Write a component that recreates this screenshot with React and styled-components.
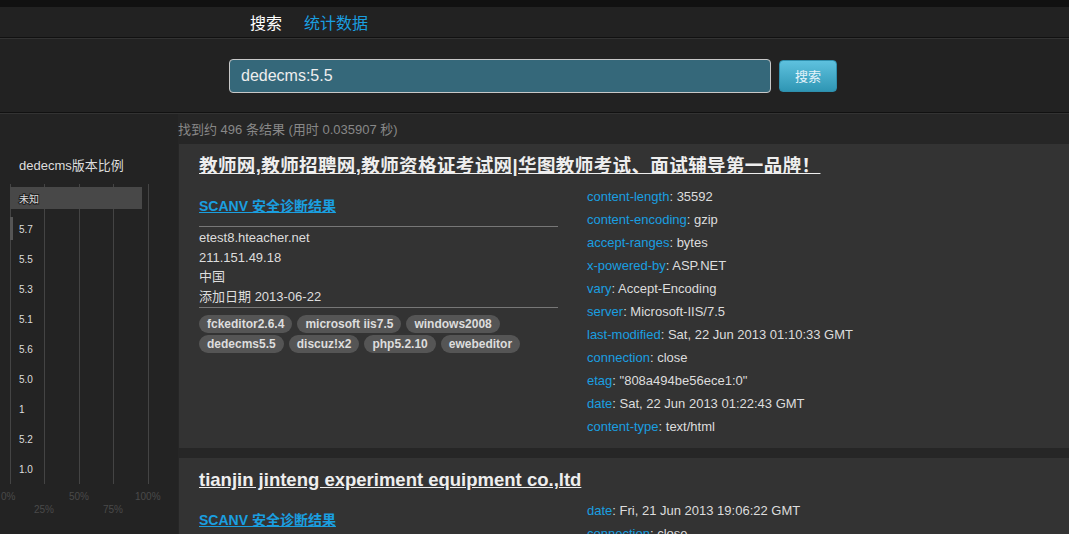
import React from 'react';
import styled, { createGlobalStyle } from 'styled-components';

const headers1 = [
  ['content-length', '35592'],
  ['content-encoding', 'gzip'],
  ['accept-ranges', 'bytes'],
  ['x-powered-by', 'ASP.NET'],
  ['vary', 'Accept-Encoding'],
  ['server', 'Microsoft-IIS/7.5'],
  ['last-modified', 'Sat, 22 Jun 2013 01:10:33 GMT'],
  ['connection', 'close'],
  ['etag', '"808a494be56ece1:0"'],
  ['date', 'Sat, 22 Jun 2013 01:22:43 GMT'],
  ['content-type', 'text/html'],
];

const headers2 = [
  ['date', 'Fri, 21 Jun 2013 19:06:22 GMT'],
  ['connection', 'close'],
];

const tags1 = ['fckeditor2.6.4', 'microsoft iis7.5', 'windows2008', 'dedecms5.5', 'discuz!x2', 'php5.2.10', 'ewebeditor'];

const versions = ['未知', '5.7', '5.5', '5.3', '5.1', '5.6', '5.0', '1', '5.2', '1.0'];

const results = [
  {
    title: '教师网,教师招聘网,教师资格证考试网|华图教师考试、面试辅导第一品牌！',
    host: 'etest8.hteacher.net',
    ip: '211.151.49.18',
    country: '中国',
    date: '2013-06-22',
    tags: tags1,
    headers: headers1,
    cjk: true,
  },
  {
    title: 'tianjin jinteng experiment equipment co.,ltd',
    host: 'www.jintengyiqi.com',
    ip: '61.181.223.42',
    country: '中国',
    date: '2013-06-22',
    tags: [],
    headers: headers2,
  },
];

function VersionChart () {
  const grid = [10, 44, 79, 113, 148];
  return (
    <svg width="170" height="340" viewBox="0 0 170 340">
      {grid.map((x) => (
        <line key={x} x1={x + 0.5} y1="5" x2={x + 0.5} y2="305" stroke="#444" strokeWidth="1" />
      ))}
      <rect x="10" y="8" width="132" height="22" fill="#484848" />
      <rect x="10" y="38" width="3" height="23" fill="#555" />
      {versions.map((v, i) => (
        <text
          key={v}
          x="19"
          y={24 + i * 30}
          fill="#ddd"
          fontSize="10"
          fontFamily="'Liberation Sans', 'Noto Sans CJK SC', sans-serif"
          stroke={i === 0 ? '#222' : 'none'}
          strokeWidth={i === 0 ? 2 : 0}
          paintOrder="stroke"
        >
          {v}
        </text>
      ))}
      <g fill="#4a4a4a" fontSize="10" fontFamily="'Liberation Sans', sans-serif">
        <text x="1" y="321">0%</text>
        <text x="69" y="321">50%</text>
        <text x="135" y="321">100%</text>
        <text x="34" y="334">25%</text>
        <text x="103" y="334">75%</text>
      </g>
    </svg>
  );
}

function ResultCard ({ item }) {
  return (
    <Card>
      <CardTitle href="#" $cjk={item.cjk}>{item.title}</CardTitle>
      <CardBody>
        <LeftCol>
          <ScanLink href="#">SCANV 安全诊断结果</ScanLink>
          <Rule $top={10} $bottom={1} />
          <InfoLine>{item.host}</InfoLine>
          <InfoLine>{item.ip}</InfoLine>
          <InfoLine>{item.country}</InfoLine>
          <InfoLine>添加日期 {item.date}</InfoLine>
          <Rule $top={0} $bottom={7} />
          <TagList>
            {item.tags.map((t) => (
              <Tag key={t}>{t}</Tag>
            ))}
          </TagList>
        </LeftCol>
        <RightCol>
          {item.headers.map(([k, v]) => (
            <HeaderLine key={k}>
              <HeaderKey>{k}</HeaderKey>: {v}
            </HeaderLine>
          ))}
        </RightCol>
      </CardBody>
    </Card>
  );
}

function App () {
  return (
    <>
      <GlobalStyle />
      <TopStrip />
      <Nav>
        <NavItem>搜索</NavItem>
        <NavItem $active>统计数据</NavItem>
      </Nav>
      <SearchBar>
        <SearchInput defaultValue="dedecms:5.5" />
        <SearchButton>搜索</SearchButton>
      </SearchBar>
      <Body>
        <Sidebar>
          <SideTitle>dedecms版本比例</SideTitle>
          <VersionChart />
        </Sidebar>
        <Main>
          <Stats>找到约 496 条结果 (用时 0.035907 秒)</Stats>
          {results.map((r) => (
            <ResultCard key={r.title} item={r} />
          ))}
        </Main>
      </Body>
    </>
  );
}

const GlobalStyle = createGlobalStyle`
  html, body {
    margin: 0;
    padding: 0;
    background: #262626;
    overflow: hidden;
  }
  body {
    font-family: 'Liberation Sans', 'Noto Sans CJK SC', sans-serif;
    color: #ddd;
  }
`;

const TopStrip = styled.div`
  height: 7px;
  background: #111;
`;

const Nav = styled.div`
  height: 30px;
  background: #222;
  border-bottom: 1px solid #111;
  box-shadow: 0 1px 0 #333;
  display: flex;
  align-items: center;
  gap: 22px;
  padding-left: 250px;
`;

const NavItem = styled.a`
  font-size: 16px;
  line-height: 28px;
  font-family: 'Noto Sans CJK SC', sans-serif;
  color: ${(p) => (p.$active ? '#1a9fe0' : '#fff')};
  text-decoration: none;
  cursor: pointer;
`;

const SearchBar = styled.div`
  margin-top: 1px;
  height: 73px;
  background: #222;
  border-bottom: 1px solid #111;
  box-shadow: 0 1px 0 #333;
  display: flex;
  align-items: center;
  gap: 8px;
  padding-left: 229px;
`;

const SearchInput = styled.input`
  box-sizing: border-box;
  width: 542px;
  height: 34px;
  background: #35687a;
  border: 1px solid #c8c8c8;
  border-radius: 4px;
  color: #eee;
  font-size: 16px;
  font-family: 'Liberation Sans', sans-serif;
  padding: 0 11px;
  outline: none;
`;

const SearchButton = styled.button`
  box-sizing: border-box;
  width: 58px;
  height: 32px;
  border: 1px solid #2f8fad;
  border-radius: 4px;
  background: linear-gradient(to bottom, #5ec1de, #2f96b4);
  color: #e4f3fa;
  font-size: 13px;
  font-family: 'Noto Sans CJK SC', sans-serif;
`;

const Body = styled.div`
  display: flex;
  margin-top: 1px;
`;

const Sidebar = styled.div`
  width: 178px;
  flex-shrink: 0;
  background: #232323;
  padding-top: 42px;
  min-height: 460px;
  box-sizing: border-box;
`;

const SideTitle = styled.div`
  font-size: 13px;
  line-height: 20px;
  color: #ddd;
  padding-left: 19px;
  margin-bottom: 3px;
`;

const Main = styled.div`
  flex: 1;
  min-width: 0;
`;

const Stats = styled.div`
  height: 30px;
  line-height: 32px;
  font-size: 13px;
  color: #888;
`;

const Card = styled.div`
  background: #333;
  margin: 0 0 10px 1px;
  padding: 10px 20px 10px;
`;

const CardTitle = styled.a`
  display: inline-block;
  font-size: 18.5px;
  line-height: 24px;
  font-weight: bold;
  color: #eee;
  text-decoration: underline;
  letter-spacing: ${(p) => (p.$cjk ? '0.4px' : '0')};
`;

const CardBody = styled.div`
  display: flex;
  gap: 29px;
  margin-top: 7px;
`;

const LeftCol = styled.div`
  width: 359px;
  flex-shrink: 0;
  padding-top: 11px;
`;

const ScanLink = styled.a`
  display: inline-block;
  font-size: 14px;
  line-height: 20px;
  font-weight: bold;
  color: #1a9fe0;
  text-decoration: underline;
`;

const Rule = styled.div`
  height: 1px;
  background: #777;
  margin: ${(p) => p.$top}px 0 ${(p) => p.$bottom}px;
`;

const InfoLine = styled.div`
  font-size: 13px;
  line-height: 19.7px;
  height: 19.7px;
  color: #ddd;
`;

const TagList = styled.div`
  display: flex;
  flex-wrap: wrap;
  gap: 2px 5px;
`;

const Tag = styled.span`
  display: inline-block;
  background: #555;
  color: #ddd;
  font-size: 12px;
  font-weight: bold;
  line-height: 18px;
  padding: 0 8px;
  border-radius: 9px;
`;

const RightCol = styled.div`
  flex: 1;
`;

const HeaderLine = styled.div`
  font-size: 13px;
  line-height: 23px;
  color: #ddd;
`;

const HeaderKey = styled.span`
  color: #1a9fe0;
`;

export default App;
